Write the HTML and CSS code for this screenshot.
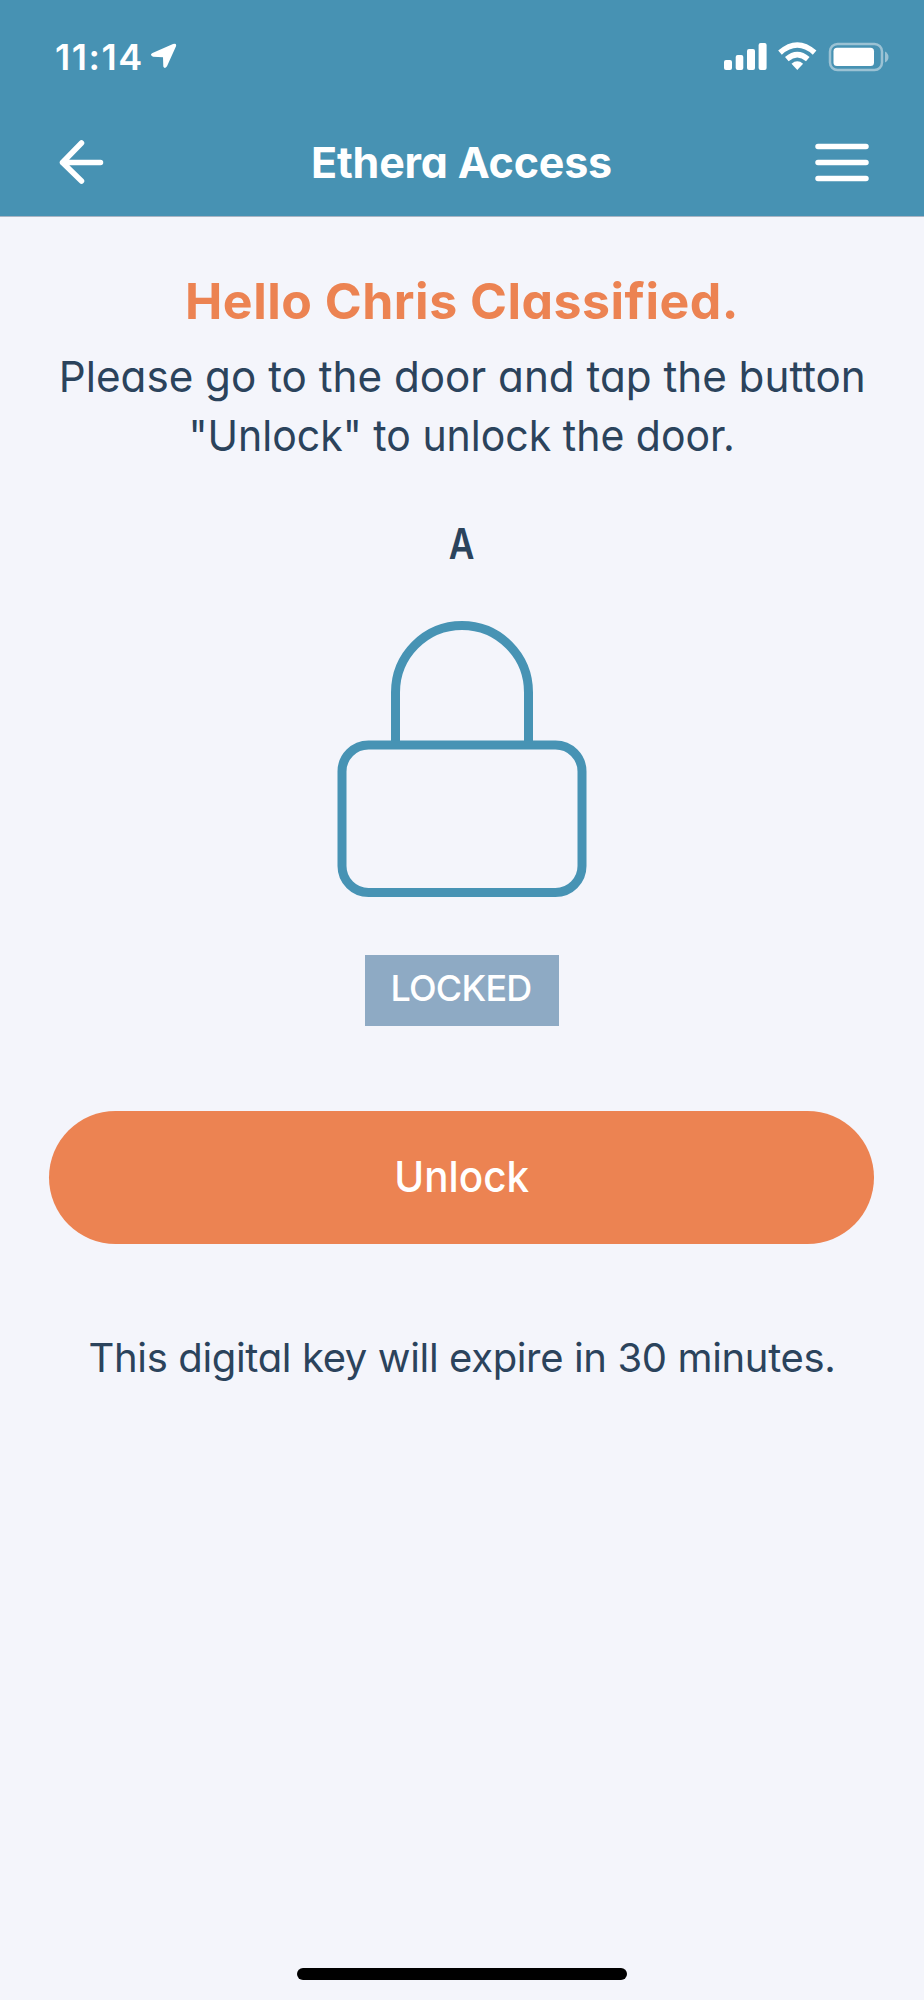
FILE: index.html
```html
<!DOCTYPE html>
<html lang="en">
<head>
<meta charset="utf-8">
<title>Ethera Access</title>
<link rel="stylesheet" href="styles.css">
</head>
<body>
<div class="screen">
  <header class="header">
    <div class="status">
      <div class="clock"><span class="time">11:14</span>
        <svg class="location" width="26" height="26" viewBox="0 0 26 26"><path d="M1.500 10 22 1Q26 -.2 24.900 3.500L16 23.300Q13.600 26.500 12.300 23.500L12 14.200 2 13.700Q-1.800 12 1.500 10Z"/></svg>
      </div>
      <svg class="indicators" width="166" height="30" viewBox="0 0 166 30">
        <rect x="0" y="18" width="8" height="10" rx="2"/>
        <rect x="11.7" y="13" width="7.6" height="15" rx="2"/>
        <rect x="23" y="7" width="8" height="21" rx="2"/>
        <rect x="34.6" y="1" width="8" height="27" rx="2"/>
        <g class="waves"><path d="M56 10.6Q73.300-4.600 90.600 10.600"/><path d="M62.800 17.200Q73.300 8.200 83.800 17.200"/></g>
        <path d="M67.500 21.700Q73.300 16.800 79.100 21.700L73.300 28Z"/>
        <rect class="battery" x="106" y="2" width="52" height="26" rx="7.500"/>
        <rect x="109.500" y="5.800" width="40.500" height="18.200" rx="3.500"/>
        <path class="terminal" d="M161 9.500Q164.500 11.500 164.500 15T161 20.500Z"/>
      </svg>
    </div>
    <nav class="nav">
      <svg width="48" height="48" viewBox="0 0 48 48" class="line-icon"><path d="M25.500 5 6.500 24.500 25.500 43M6.500 24.500H44.500"/></svg>
      <h1 class="title">Ethera Access</h1>
      <svg width="54" height="40" viewBox="0 0 54 40" class="line-icon menu"><path d="M3 4.500H51M3 20.500H51M3 36.500H51"/></svg>
    </nav>
  </header>
  <main class="content">
    <h2 class="greeting">Hello Chris Classified.</h2>
    <p class="instructions"><span class="line-one">Please go to the door and tap the button</span><br><span class="line-two">"Unlock" to unlock the door.</span></p>
    <div class="door">A</div>
    <svg class="lock" width="250" height="278" viewBox="0 0 250 278"><path d="M58.500 125V72.500a66.500 67 0 0 1 133 0V125"/><rect x="5" y="125" width="240" height="147.500" rx="26.500"/></svg>
    <div class="state">LOCKED</div>
    <button class="unlock"><span class="unlock-label">Unlock</span></button>
    <p class="expiry">This digital key will expire in 30 minutes.</p>
  </main>
  <div class="home-bar"></div>
</div>
</body>
</html>
```
FILE: styles.css
```css
* { box-sizing: border-box; }
body { margin: 0; background: #f4f5fb; color: #2b435c; font-family: Inter, "Noto Sans", sans-serif; font-feature-settings: "cv11"; }
.screen { width: 924px; height: 2000px; display: flex; flex-direction: column; align-items: center; overflow: hidden; white-space: nowrap; }
.header { width: 100%; height: 217px; flex: none; background: #4792b3; border-bottom: 1px solid #a9b5c4; color: #fff; }
.status { height: 108px; padding: 42px 34px 0 55px; display: flex; justify-content: space-between; align-items: flex-start; }
.clock { display: flex; gap: 8px; align-items: flex-start; }
.time { font-size: 36px; line-height: 30px; font-weight: 600; letter-spacing: 1.5px; width: 88px; }
.location { fill: #fff; margin-top: 1px; }
.indicators { fill: #fff; }
.waves { fill: none; stroke: #fff; stroke-width: 5.500; }
.battery { fill: none; stroke: #9bc2d4; stroke-width: 2.500; }
.terminal { fill: #9bc2d4; }
.nav { height: 108px; padding: 0 54px 0 56px; display: flex; justify-content: space-between; align-items: center; }
.menu { margin-right: 1px; }
.line-icon { fill: none; stroke: #fff; stroke-width: 5.500; stroke-linecap: round; stroke-linejoin: round; }
.title { margin: 0 0 0 4px; font-size: 43px; line-height: 60px; font-weight: 700; letter-spacing: -0.2px; }
.content { width: 100%; padding: 53px 49px 0; display: flex; flex-direction: column; align-items: center; text-align: center; }
.greeting { margin: 0; color: #ec8352; font-size: 50px; line-height: 62px; font-weight: 700; letter-spacing: 0.5px; }
.instructions { margin: 15px 0 0; font-size: 43px; line-height: 59px; }
.line-one, .line-two, .unlock-label { display: inline-block; }
.line-one { transform: scaleX(0.981); }
.line-two { transform: scaleX(0.953); }
.door { margin-top: 48px; font-size: 43px; line-height: 60px; font-weight: 600; transform: scaleX(0.82); }
.lock { margin-top: 47px; fill: none; stroke: #4793b4; stroke-width: 9; }
.state { margin-top: 57px; width: 194px; height: 71px; background: #8eaac4; color: #fff; font-size: 36px; line-height: 67px; font-weight: 500; letter-spacing: -0.8px; padding-right: 2px; }
.unlock { margin-top: 85px; width: 825px; height: 133px; border: 0; border-radius: 67px; background: #ec8352; color: #fff; font-family: inherit; font-feature-settings: inherit; font-size: 43px; font-weight: 500; padding: 0 0 4px; align-self: flex-start; }
.unlock-label { transform: scaleX(0.94); }
.expiry { margin: 85px 0 0; font-size: 40px; line-height: 58px; letter-spacing: -0.36px; }
.home-bar { margin-top: auto; margin-bottom: 20px; width: 330px; height: 12px; flex: none; border-radius: 6px; background: #000; }
```
